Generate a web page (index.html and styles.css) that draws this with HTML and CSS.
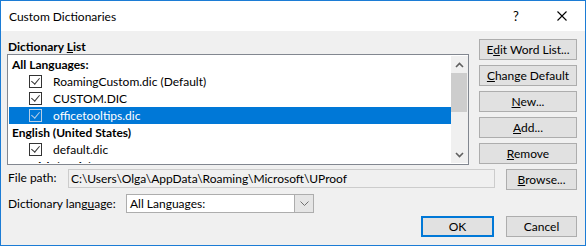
FILE: index.html
```html
<!DOCTYPE html>
<html lang="en">
<head>
    <meta charset="UTF-8">
    <meta name="viewport" content="width=device-width, initial-scale=1.0">
    <title>Custom Dictionaries</title>
    <link rel="stylesheet" href="styles.css">
</head>
<body>
    <div class="window">
        <div class="titlebar">
            <span class="title">Custom Dictionaries</span>
            <span class="title-btn help">?</span>
            <span class="title-btn close">
                <svg width="10" height="10" viewBox="0 0 10 10"><path d="M0.5 0.5 L9.5 9.5 M9.5 0.5 L0.5 9.5" stroke="#000" stroke-width="1.1" fill="none"/></svg>
            </span>
        </div>

        <div class="content">
            <div class="top">
                <div class="list-area">
                    <div class="list-label">Dictionary <u>L</u>ist</div>
                    <div class="listbox">
                        <div class="rows">
                            <div class="row group">All Languages:</div>
                            <div class="row item"><span class="check"></span>RoamingCustom.dic (Default)</div>
                            <div class="row item"><span class="check"></span>CUSTOM.DIC</div>
                            <div class="row item selected"><span class="check"></span>officetooltips.dic</div>
                            <div class="row group">English (United States)</div>
                            <div class="row item"><span class="check"></span>default.dic</div>
                            <div class="row group">Spanish (Spain)</div>
                        </div>
                        <div class="scrollbar">
                            <div class="arrow">
                                <svg width="9" height="6" viewBox="0 0 9 6"><path d="M1 5 L4.5 1.5 L8 5" stroke="#606060" stroke-width="1.6" fill="none"/></svg>
                            </div>
                            <div class="track"><div class="thumb"></div></div>
                            <div class="arrow">
                                <svg width="9" height="6" viewBox="0 0 9 6"><path d="M1 1 L4.5 4.5 L8 1" stroke="#606060" stroke-width="1.6" fill="none"/></svg>
                            </div>
                        </div>
                    </div>
                </div>

                <div class="buttons">
                    <button class="btn">E<u>d</u>it Word List...</button>
                    <button class="btn"><u>C</u>hange Default</button>
                    <button class="btn"><u>N</u>ew...</button>
                    <button class="btn"><u>A</u>dd...</button>
                    <button class="btn"><u>R</u>emove</button>
                </div>
            </div>

            <div class="path-row">
                <span class="field-label path-label">File path:</span>
                <div class="path-field">C:\Users\Olga\AppData\Roaming\Microsoft\UProof</div>
                <button class="btn browse"><u>B</u>rowse...</button>
            </div>

            <div class="lang-row">
                <span class="field-label lang-label">Dictionary lang<u>u</u>age:</span>
                <div class="combo">
                    <span class="combo-text">All Languages:</span>
                    <span class="combo-btn">
                        <svg width="9" height="5" viewBox="0 0 9 5"><path d="M0.5 0.5 L4.5 4.5 L8.5 0.5" stroke="#707070" stroke-width="1" fill="none"/></svg>
                    </span>
                </div>
            </div>

            <div class="actions">
                <button class="btn ok">OK</button>
                <button class="btn cancel">Cancel</button>
            </div>
        </div>
    </div>
</body>
</html>
```

FILE: styles.css
```css
body {
    margin: 0;
    font-family: "Segoe UI", Lato, "Noto Sans", sans-serif;
    font-size: 12px;
    color: #000;
}

.window {
    width: 586px;
    height: 246px;
    box-sizing: border-box;
    border: 1px solid #1c7cd5;
    display: flex;
    flex-direction: column;
}

.titlebar {
    height: 30px;
    background: #ffffff;
    display: flex;
    align-items: center;
}

.title {
    flex: 1;
    padding-left: 8px;
}

.title-btn {
    width: 46px;
    height: 30px;
    display: flex;
    justify-content: center;
    align-items: center;
}

.help {
    font-size: 13px;
}

.content {
    flex: 1;
    background: #f0f0f0;
    padding: 8px 8px 0 6px;
}

.top {
    display: flex;
    gap: 10px;
}

.list-area {
    width: 462px;
}

.list-label {
    font-weight: bold;
    height: 15px;
    line-height: 15px;
    padding-left: 1px;
}

.listbox {
    height: 111px;
    box-sizing: border-box;
    border: 1px solid #828790;
    padding: 1px 0 1px 1px;
    background: #ffffff;
    display: flex;
}

.rows {
    flex: 1;
    overflow: hidden;
}

.row {
    height: 17px;
    line-height: 17px;
    display: flex;
    align-items: center;
    white-space: nowrap;
}

.group {
    font-weight: bold;
    padding-left: 3px;
}

.item {
    padding-left: 20px;
}

.check {
    width: 13px;
    height: 13px;
    box-sizing: border-box;
    border: 1px solid #333333;
    margin-right: 11px;
    position: relative;
}

.check::after {
    content: "";
    position: absolute;
    left: 3px;
    top: 0px;
    width: 4px;
    height: 7px;
    border-right: 1px solid #333333;
    border-bottom: 1px solid #333333;
    transform: rotate(40deg);
}

.selected {
    background: #0078d7;
    color: #ffffff;
}

.selected .check,
.selected .check::after {
    border-color: #b9cfe6;
}

.scrollbar {
    width: 17px;
    background: #f0f0f0;
    display: flex;
    flex-direction: column;
}

.arrow {
    height: 17px;
    display: flex;
    justify-content: center;
    align-items: center;
}

.track {
    flex: 1;
}

.thumb {
    height: 39px;
    margin: 0 1px 0 0;
    background: #cdcdcd;
}

.buttons {
    width: 98px;
    display: flex;
    flex-direction: column;
    gap: 5px;
}

.btn {
    height: 21px;
    padding: 0;
    background: #e1e1e1;
    border: 1px solid #adadad;
    font-family: inherit;
    font-size: 12px;
    color: #000;
}

.path-row {
    margin-top: 4px;
    display: flex;
    align-items: flex-start;
}

.field-label {
    padding-left: 1px;
    box-sizing: border-box;
}

.path-label {
    width: 61px;
    line-height: 17px;
}

.path-field {
    width: 428px;
    height: 19px;
    box-sizing: border-box;
    border: 1px solid #cccccc;
    background: #f0f0f0;
    padding-left: 2px;
    line-height: 17px;
    white-space: nowrap;
}

.browse {
    width: 71px;
    margin-left: 11px;
}

.lang-row {
    margin-top: 4px;
    display: flex;
    align-items: center;
}

.lang-label {
    width: 119px;
}

.combo {
    width: 188px;
    height: 19px;
    box-sizing: border-box;
    border: 1px solid #adadad;
    background: #ffffff;
    display: flex;
}

.combo-text {
    flex: 1;
    padding-left: 3px;
    line-height: 17px;
}

.combo-btn {
    width: 18px;
    background: #e5e5e5;
    border-left: 1px solid #adadad;
    display: flex;
    justify-content: center;
    align-items: center;
}

.actions {
    margin-top: 3px;
    display: flex;
    justify-content: flex-end;
    gap: 12px;
}

.ok {
    width: 73px;
    border: 2px solid #0078d7;
}

.cancel {
    width: 71px;
}
```
